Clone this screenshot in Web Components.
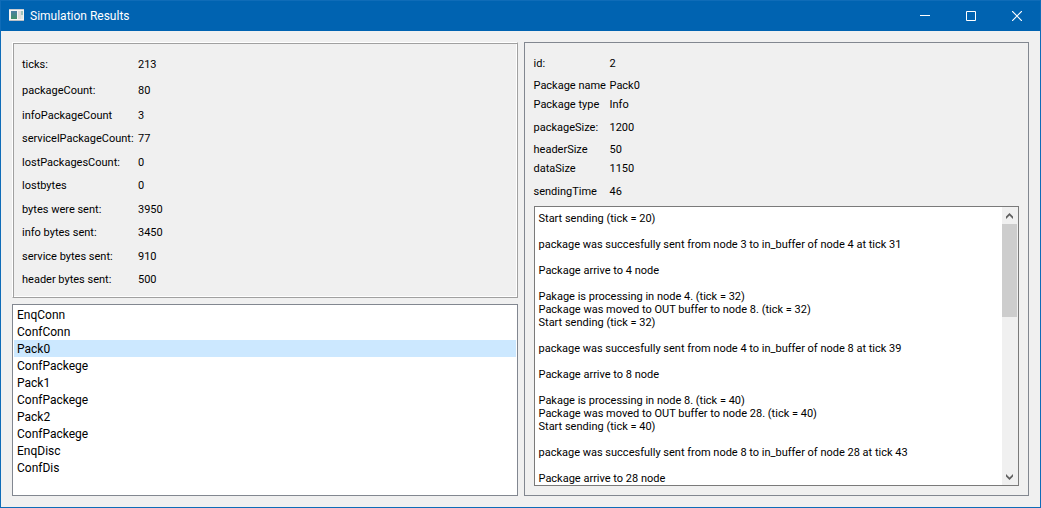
<!DOCTYPE html>
<html lang="en">
<head>
<meta charset="utf-8">
<title>Simulation Results</title>
<style>
  html, body { height: 100%; margin: 0; }
  body { font: 11px/13px Roboto, Tahoma, sans-serif; color: #000; }
</style>
</head>
<body>
<sim-window caption="Simulation Results">
  <summary-frame slot="summary">
    <value-table id="totals"></value-table>
  </summary-frame>
  <package-list slot="packages"></package-list>
  <package-details slot="details">
    <value-table id="package" compact></value-table>
    <event-log slot="log"></event-log>
  </package-details>
</sim-window>

<script>
const TOTALS = [
  ['ticks:', '213', 26], ['packageCount:', '80', 26],
  ['infoPackageCount', '3', 24], ['servicelPackageCount:', '77', 23],
  ['lostPackagesCount:', '0', 24], ['lostbytes', '0', 23],
  ['bytes were sent:', '3950', 24], ['info bytes sent:', '3450', 23],
  ['service bytes sent:', '910', 24], ['header bytes sent:', '500', 23]
];
const PACKAGE = [
  ['id:', '2', 26], ['Package name', 'Pack0', 19], ['Package type', 'Info', 19],
  ['packageSize:', '1200', 26], ['headerSize', '50', 19],
  ['dataSize', '1150', 19], ['sendingTime', '46', 26]
];
const PACKAGES = ['EnqConn', 'ConfConn', 'Pack0', 'ConfPackege', 'Pack1',
  'ConfPackege', 'Pack2', 'ConfPackege', 'EnqDisc', 'ConfDis'];
const LOG = `Start sending (tick = 20)

package was succesfully sent from node 3 to in_buffer of node 4 at tick 31

Package arrive to 4 node

Pakage is processing in node 4. (tick = 32)
Package was moved to OUT buffer to node 8. (tick = 32)
Start sending (tick = 32)

package was succesfully sent from node 4 to in_buffer of node 8 at tick 39

Package arrive to 8 node

Pakage is processing in node 8. (tick = 40)
Package was moved to OUT buffer to node 28. (tick = 40)
Start sending (tick = 40)

package was succesfully sent from node 8 to in_buffer of node 28 at tick 43

Package arrive to 28 node`;

class Base extends HTMLElement {
  constructor() {
    super();
    this.attachShadow({ mode: 'open' }).innerHTML =
      '<style>*{box-sizing:border-box}:host{box-sizing:border-box;display:block}</style>' + this.markup();
  }
}

/* Window frame: title bar plus the two-column client area. */
customElements.define('sim-window', class extends Base {
  markup() {
    return `<style>
      :host { display: flex; flex-direction: column; min-height: 100vh; border: 1px solid #0f6cb8; background: #f0f0f0; }
      main { flex: 1; display: grid; grid-template-columns: minmax(0, 1fr) minmax(0, 1fr); gap: 6px; padding: 11px; }
      .left { display: grid; grid-template-rows: auto 1fr; gap: 6px; min-width: 0; }
      slot[name=details]::slotted(*) { min-width: 0; }
    </style>
    <title-bar></title-bar>
    <main>
      <div class="left"><slot name="summary"></slot><slot name="packages"></slot></div>
      <slot name="details"></slot>
    </main>`;
  }
  connectedCallback() {
    this.shadowRoot.querySelector('title-bar').setAttribute('caption', this.getAttribute('caption'));
  }
});

customElements.define('title-bar', class extends Base {
  static observedAttributes = ['caption'];
  markup() {
    return `<style>
      :host { display: flex; align-items: center; height: 30px; padding-left: 8px; background: #0063b1; color: #fff; }
      .app { width: 16px; height: 16px; }
      h1 { flex: 1; margin: 0 0 0 5px; font: 12px/16px Roboto, "Segoe UI", sans-serif; }
      button { width: 46px; height: 30px; padding: 0; border: 0; background: none; color: inherit; display: grid; place-items: center; }
      button:hover { background: #1a73b9; }
      button svg { width: 10px; height: 10px; fill: none; stroke: currentColor; }
    </style>
    <svg class="app" viewBox="0 0 16 16" aria-hidden="true">
      <defs><linearGradient id="g" x1="0" y1="0" x2="0" y2="1"><stop offset="0" stop-color="#4a7fa5"/><stop offset="1" stop-color="#3f9068"/></linearGradient></defs>
      <path d="M0 1h15v12H0z" fill="#f4f4f4"/><path d="M0 1h15v1H0z" fill="#c9ced4"/>
      <path d="M2 3h6v8H2z" fill="url(#g)"/><path d="M9 3h3v8H9z" fill="#dcdcdc"/>
      <path d="M12 3h2v4h-2z" fill="#9fc4bb"/><path d="M12 7h2v4h-2z" fill="#dfe9e4"/><path d="M0 12h15v1H0z" fill="#b9bec4"/>
    </svg>
    <h1></h1>
    <button aria-label="Minimize"><svg viewBox="0 0 10 10"><path d="M0 4.5h10"/></svg></button>
    <button aria-label="Maximize"><svg viewBox="0 0 10 10"><path d="M.5.5h9v9h-9z"/></svg></button>
    <button aria-label="Close"><svg viewBox="0 0 10 10"><path d="M0 0l10 10M10 0L0 10" stroke-width="1.2"/></svg></button>`;
  }
  attributeChangedCallback(n, o, v) { this.shadowRoot.querySelector('h1').textContent = v; }
});

/* Raised two-tone frame around the totals. */
customElements.define('summary-frame', class extends Base {
  markup() {
    return `<style>
      :host { padding: 8px 9px 6px; border: 1px solid; border-color: #fff #a0a0a0 #a0a0a0 #fff;
              box-shadow: inset 1px 1px #a0a0a0, inset -1px -1px #fff; }
    </style><slot></slot>`;
  }
});

customElements.define('value-table', class extends Base {
  markup() {
    return `<style>
      :host { --label: 116px; }
      :host([compact]) { --label: 76px; }
      table { border-collapse: collapse; table-layout: fixed; width: 100%; }
      th { width: var(--label); font-weight: normal; text-align: left; }
      th, td { padding: 0; vertical-align: middle; white-space: nowrap; }
    </style><table><tbody></tbody></table>`;
  }
  set rows(rows) {
    this.shadowRoot.querySelector('tbody').innerHTML = rows.map(([k, v, h]) =>
      `<tr style="height:${h}px"><th scope="row">${k}</th><td>${v}</td></tr>`).join('');
  }
});

customElements.define('package-list', class extends Base {
  markup() {
    return `<style>
      :host { padding: 1px; border: 1px solid #828790; background: #fff; }
      ul { margin: 0; padding: 0; list-style: none; font: 12px/17px Roboto, "Segoe UI", sans-serif; }
      li { height: 17px; padding: 1px 0 0 3px; cursor: default; }
      li[aria-selected=true] { background: #cce8ff; }
    </style><ul role="listbox" aria-label="Packages" tabindex="0">${PACKAGES.map((p, i) =>
      `<li role="option" aria-selected="${i === 2}">${p}</li>`).join('')}</ul>`;
  }
});

customElements.define('package-details', class extends Base {
  markup() {
    return `<style>
      :host { display: flex; flex-direction: column; padding: 7px 9px 9px; border: 1px solid #828790; }
      slot[name=log]::slotted(*) { flex: 1; margin-top: 2px; }
    </style><slot></slot><slot name="log"></slot>`;
  }
});

customElements.define('event-log', class extends Base {
  markup() {
    return `<style>
      :host { display: flex; border: 1px solid #7a7a7a; background: #fff; }
      textarea { flex: 1; min-width: 0; padding: 5px 4px 0; border: 0; outline: 0; resize: none; overflow: hidden;
                 background: none; color: inherit; font: inherit; white-space: pre; }
    </style><textarea readonly aria-label="Event log">${LOG}</textarea><scroll-bar></scroll-bar>`;
  }
});

customElements.define('scroll-bar', class extends Base {
  markup() {
    return `<style>
      :host { display: flex; flex-direction: column; width: 16px; background: #f0f0f0; }
      button { height: 17px; padding: 0 1px 0 0; border: 0; background: none; display: grid; place-items: center; }
      svg { width: 7px; height: 6px; fill: #606060; }
      .track { flex: 1; padding-right: 1px; }
      .thumb { height: 38%; background: #cdcdcd; }
    </style>
    <button aria-label="Scroll up"><svg viewBox="0 0 7 6"><path d="M3.5 0L7 3.5V6L3.5 2.6 0 6V3.5z"/></svg></button>
    <div class="track"><div class="thumb"></div></div>
    <button aria-label="Scroll down"><svg viewBox="0 0 7 6"><path d="M3.5 6L7 2.5V0L3.5 3.4 0 0v2.5z"/></svg></button>`;
  }
});

document.querySelector('#totals').rows = TOTALS;
document.querySelector('#package').rows = PACKAGE;
</script>
</body>
</html>
